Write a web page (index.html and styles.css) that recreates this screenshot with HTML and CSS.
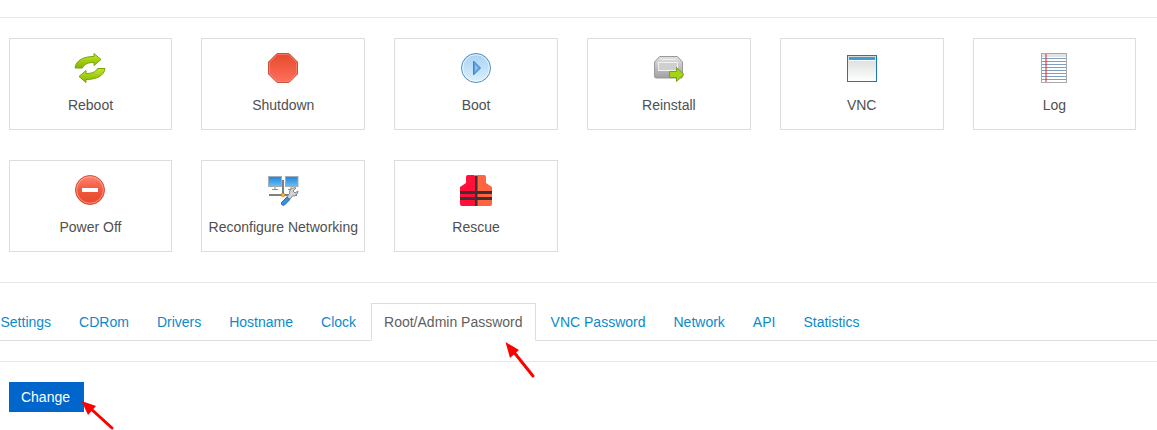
FILE: index.html
```html
<!DOCTYPE html>
<html lang="en">
<head>
  <meta charset="UTF-8" />
  <meta name="viewport" content="width=device-width, initial-scale=1.0" />
  <title>VPS Control Panel</title>
  <link rel="stylesheet" href="styles.css">
</head>
<body>

<section class="actions">
  <a class="action">
    <svg class="icon" viewBox="0 0 32 32">
      <defs><linearGradient id="g-reboot" x1="0" y1="0" x2="0" y2="1"><stop offset="0" stop-color="#c4e62a"/><stop offset="1" stop-color="#86b400"/></linearGradient></defs>
      <path d="M20 1.500 L27 7.500 L20 13.500 V10.500 C15 10.500 10.500 11.500 8.500 16 H1 C2 8.500 9 4.500 20 4.500 Z" fill="url(#g-reboot)" stroke="#76a50c"/>
      <path d="M12 30.500 L5 24.500 L12 18.500 V21.500 C17 21.500 21.500 20.500 23.500 16.500 H31 C30 23.500 23 27.500 12 27.500 Z" fill="url(#g-reboot)" stroke="#76a50c"/>
    </svg>
    <span>Reboot</span>
  </a>
  <a class="action">
    <svg class="icon" viewBox="0 0 32 32">
      <defs><linearGradient id="g-stop" x1="0" y1="0" x2="0" y2="1"><stop offset="0" stop-color="#e5492b"/><stop offset="1" stop-color="#ff705d"/></linearGradient></defs>
      <path d="M10 1.500 H22 L30.500 10 V22 L22 30.500 H10 L1.500 22 V10 Z" fill="url(#g-stop)" stroke="#c9503f"/>
      <path d="M10.500 2.500 H21.500 L29.500 10.500 V21.500 L21.500 29.500 H10.500 L2.500 21.500 V10.500 Z" fill="none" stroke="#ff9a88" stroke-opacity=".5"/>
    </svg>
    <span>Shutdown</span>
  </a>
  <a class="action">
    <svg class="icon" viewBox="0 0 32 32">
      <defs><linearGradient id="g-boot" x1="0" y1="0" x2="0" y2="1"><stop offset="0" stop-color="#a7d2f4"/><stop offset="1" stop-color="#dcf0fd"/></linearGradient></defs>
      <circle cx="16" cy="16" r="14.500" fill="url(#g-boot)" stroke="#4a8dc4"/>
      <circle cx="16" cy="16" r="13.300" fill="none" stroke="#fff" stroke-opacity=".7"/>
      <path d="M13.500 9 L20.500 16 L13.500 23 Z" fill="#5a9fdc" stroke="#3f86c6"/>
      <path d="M15 12.500 L18.500 16 L15 19.500 Z" fill="#8dc0ec"/>
    </svg>
    <span>Boot</span>
  </a>
  <a class="action">
    <svg class="icon" viewBox="0 0 32 32">
      <defs><linearGradient id="g-drive" x1="0" y1="0" x2="0" y2="1"><stop offset="0" stop-color="#e2e2e2"/><stop offset="1" stop-color="#a0a0a0"/></linearGradient></defs>
      <path d="M6.500 4.500 H24.500 L29.500 10 V24 Q29.500 26 28 26 H3 Q1.500 26 1.500 24 V10 Z" fill="url(#g-drive)" stroke="#999"/>
      <rect x="5.500" y="10.500" width="19" height="8" fill="#cfcfcf" stroke="#f2f2f2"/>
      <path d="M8 7.500 H23" stroke="#f0f0f0"/>
      <path d="M16.500 19.500 H23.500 V15.500 L31 22.500 L23.500 29.500 V25.500 H16.500 Z" fill="#a4d416" stroke="#76a50c"/>
    </svg>
    <span>Reinstall</span>
  </a>
  <a class="action">
    <svg class="icon" viewBox="0 0 32 32">
      <defs><linearGradient id="g-win" x1="0" y1="0" x2="0" y2="1"><stop offset="0" stop-color="#d5d9d6"/><stop offset="1" stop-color="#fff"/></linearGradient></defs>
      <rect x="1.500" y="3.500" width="29" height="26" fill="url(#g-win)" stroke="#1b79b3"/>
      <rect x="3" y="5" width="26" height="3" fill="#3f9ad8"/>
      <rect x="3" y="8" width="26" height="1" fill="#fff"/>
    </svg>
    <span>VNC</span>
  </a>
  <a class="action">
    <svg class="icon" viewBox="0 0 32 32">
      <rect x="3.500" y="1.500" width="25" height="29" fill="#fff" stroke="#a9a9a9"/>
      <rect x="4" y="2" width="24" height="3" fill="#e2e2e2"/>
      <path d="M4 6.500 H28 M4 9.500 H28 M4 12.500 H28 M4 15.500 H28 M4 18.500 H28 M4 21.500 H28 M4 24.500 H28 M4 27.500 H28" stroke="#7ea0c0"/>
      <path d="M8 2 V30" stroke="#ee1c25"/>
    </svg>
    <span>Log</span>
  </a>
  <a class="action">
    <svg class="icon" viewBox="0 0 32 32">
      <defs><linearGradient id="g-off" x1="0" y1="0" x2="0" y2="1"><stop offset="0" stop-color="#ff8672"/><stop offset=".5" stop-color="#f0573c"/><stop offset="1" stop-color="#e8482c"/></linearGradient></defs>
      <circle cx="16" cy="16" r="14.500" fill="url(#g-off)" stroke="#d1513c"/>
      <circle cx="16" cy="16" r="13.300" fill="none" stroke="#ffb0a0" stroke-opacity=".7"/>
      <rect x="8" y="14" width="16" height="4" fill="#fff"/>
    </svg>
    <span>Power Off</span>
  </a>
  <a class="action">
    <svg class="icon" viewBox="0 0 32 32">
      <defs><linearGradient id="g-screen" x1="0" y1="0" x2="0" y2="1"><stop offset="0" stop-color="#1f84dc"/><stop offset="1" stop-color="#6cc0f0"/></linearGradient></defs>
      <path d="M16 6 V21 M2 21 H30" stroke="#555" stroke-width="1.500"/>
      <path d="M8 13 V15 M24 13 V15 M5 15.500 H11 M21 15.500 H27" stroke="#8a9096"/>
      <rect x="1.500" y="2.500" width="13" height="10" fill="url(#g-screen)" stroke="#a4aeb6"/>
      <rect x="18.500" y="2.500" width="12.500" height="10" fill="url(#g-screen)" stroke="#a4aeb6"/>
      <path d="M29 14 A5 5 0 0 0 22.500 19.500 L19 24 L22 26 L25.500 22 A5 5 0 0 0 31 17 L28 19 L26 17 Z" fill="#d2d5d7" stroke="#808488"/>
      <path d="M20 23 L23 25.500 L17.500 31 Q14 32 14.500 28.500 Z" fill="#3a8fdc" stroke="#2a70b4"/>
      <circle cx="16" cy="21" r="1.800" fill="#ffb52e" stroke="#c98512" stroke-width=".7"/>
    </svg>
    <span>Reconfigure Networking</span>
  </a>
  <a class="action">
    <svg class="icon" viewBox="0 0 32 32">
      <path d="M16 3 L14 1 H8 Q6 1 6 3 V9 L0 13 V30 Q0 32 2 32 H16 Z" fill="#ff1038"/>
      <path d="M16 3 L18 1 H24 Q26 1 26 3 V9 L32 13 V30 Q32 32 30 32 H16 Z" fill="#ff6640"/>
      <path d="M0 17 H32 V20 H0 Z M0 23 H32 V26 H0 Z M15 1.500 H17.500 V32 H15 Z" fill="#3d2f33"/>
    </svg>
    <span>Rescue</span>
  </a>
</section>

<nav class="tabs">
  <a class="tab">Settings</a>
  <a class="tab">CDRom</a>
  <a class="tab">Drivers</a>
  <a class="tab">Hostname</a>
  <a class="tab">Clock</a>
  <a class="tab active">Root/Admin Password</a>
  <a class="tab">VNC Password</a>
  <a class="tab">Network</a>
  <a class="tab">API</a>
  <a class="tab">Statistics</a>
</nav>

<div class="panel">
  <button class="btn">Change</button>
</div>

<!-- red annotation arrows drawn over the screenshot -->
<svg class="marks" viewBox="0 0 1157 430">
  <path d="M533 376 L513 351" stroke="#f00" stroke-width="3" stroke-linecap="round"/>
  <path d="M505.500 342 L519 350 L510 358 Z" fill="#f00"/>
  <path d="M112 428 L90 408" stroke="#f00" stroke-width="3" stroke-linecap="round"/>
  <path d="M81.500 401 L96 406 L88 415 Z" fill="#f00"/>
</svg>

</body>
</html>
```

FILE: styles.css
```css
html, body {
  height: 430px;
  overflow: hidden;
}
body {
  margin: 0;
  background: #fff;
  color: #505050;
  font-family: "Liberation Sans", Arial, sans-serif;
  font-size: 14px;
  position: relative;
}

/* Action grid */
.actions {
  margin-top: 17px;
  padding: 20px 0 30px 8.6px;
  border-top: 1px solid #e6e6e6;
  border-bottom: 1px solid #e6e6e6;
  display: grid;
  grid-template-columns: repeat(6, 163.8px);
  grid-auto-rows: 92px;
  column-gap: 29px;
  row-gap: 30px;
}
.action {
  border: 1px solid #ddd;
  display: flex;
  flex-direction: column;
  align-items: center;
  padding-top: 13px;
  white-space: nowrap;
}
.icon {
  width: 32px;
  height: 32px;
  display: block;
  overflow: visible;
}
.action span {
  margin-top: 12px;
  line-height: 18px;
}

/* Tabs */
.tabs {
  display: flex;
  gap: 2px;
  margin: 20px 0 0 -12.5px;
  border-bottom: 1px solid #ddd;
  height: 37px;
}
.tab {
  color: #0a8acb;
  padding: 0 13px;
  height: 38px;
  line-height: 38px;
  box-sizing: border-box;
  white-space: nowrap;
}
.tab.active {
  color: #606060;
  background: #fff;
  padding: 0 12px;
  border: 1px solid #ddd;
  border-bottom-color: #fff;
  line-height: 36px;
}

/* Panel under the tabs */
.panel {
  margin-top: 20px;
  border-top: 1px solid #e6e6e6;
  padding: 20px 9px;
}
.btn {
  display: block;
  width: 75px;
  height: 30px;
  border: none;
  padding: 0 2px 0 0;
  background: #0066cc;
  color: #fff;
  font-family: inherit;
  font-size: 14px;
}

.marks {
  position: absolute;
  left: 0;
  top: 0;
  width: 1157px;
  height: 430px;
  pointer-events: none;
}
```
